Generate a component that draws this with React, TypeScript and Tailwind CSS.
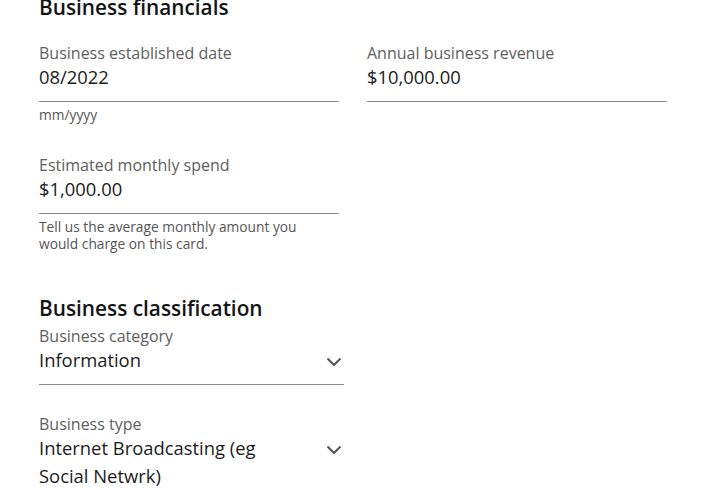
import React from 'react';

const font = { fontFamily: '"Open Sans", "Noto Sans", sans-serif' };

interface FieldProps {
  label: string;
  value: string;
  helper?: React.ReactNode;
}

// Plain text field with underline
const Field: React.FC<FieldProps> = ({ label, value, helper }) => (
  <div className="w-[300px]">
    <div className="border-b border-[#8a8a8a] pb-[12px]">
      <div className="text-[16px] leading-[20px] text-[#5e5e5e]">{label}</div>
      <div className="mt-[2px] text-[18.4px] leading-[24px] text-[#1b1b1b]">{value}</div>
    </div>
    {helper && <div className="mt-[4px] text-[13.75px] leading-[17px] text-[#555]">{helper}</div>}
  </div>
);

const Chevron = () => (
  <svg width="16" height="10" viewBox="0 0 16 10" className="shrink-0">
    <path d="M1.5 1.5 L8 8 L14.5 1.5" fill="none" stroke="#555" strokeWidth="2" />
  </svg>
);

interface SelectProps {
  label: string;
  lines: string[];
  underline?: boolean;
}

const SelectField: React.FC<SelectProps> = ({ label, lines, underline = true }) => (
  <div className={`w-[305px] ${underline ? 'border-b border-[#8a8a8a] pb-[10px]' : ''}`}>
    <div className="text-[16px] leading-[20px] text-[#5e5e5e]">{label}</div>
    <div className="flex items-start justify-between">
      <div className="text-[18.4px] leading-[28px] text-[#1b1b1b]">
        {lines.map((l) => (
          <div key={l}>{l}</div>
        ))}
      </div>
      <div className="mr-[2px] pt-[11px]">
        <Chevron />
      </div>
    </div>
  </div>
);

export default function App() {
  return (
    <div className="h-[490px] w-[711px] overflow-hidden bg-white" style={font}>
      <div className="-mt-[7px] pl-[39px]">
        <h2 className="text-[20.8px] font-semibold leading-[28px] text-[#141414]">Business financials</h2>

        <div className="mt-[22px] flex gap-[28px]">
          <Field label="Business established date" value="08/2022" helper="mm/yyyy" />
          <Field label="Annual business revenue" value="$10,000.00" />
        </div>

        <div className="mt-[32px]">
          <Field
            label="Estimated monthly spend"
            value="$1,000.00"
            helper={
              <>
                Tell us the average monthly amount you
                <br />
                would charge on this card.
              </>
            }
          />
        </div>

        <h2 className="mt-[42px] text-[20.8px] font-semibold leading-[28px] text-[#141414]">Business classification</h2>

        <div className="mt-[4px]">
          <SelectField label="Business category" lines={['Information']} />
        </div>

        <div className="mt-[29px]">
          <SelectField label="Business type" lines={['Internet Broadcasting (eg', 'Social Netwrk)']} underline={false} />
        </div>
      </div>
    </div>
  );
}
